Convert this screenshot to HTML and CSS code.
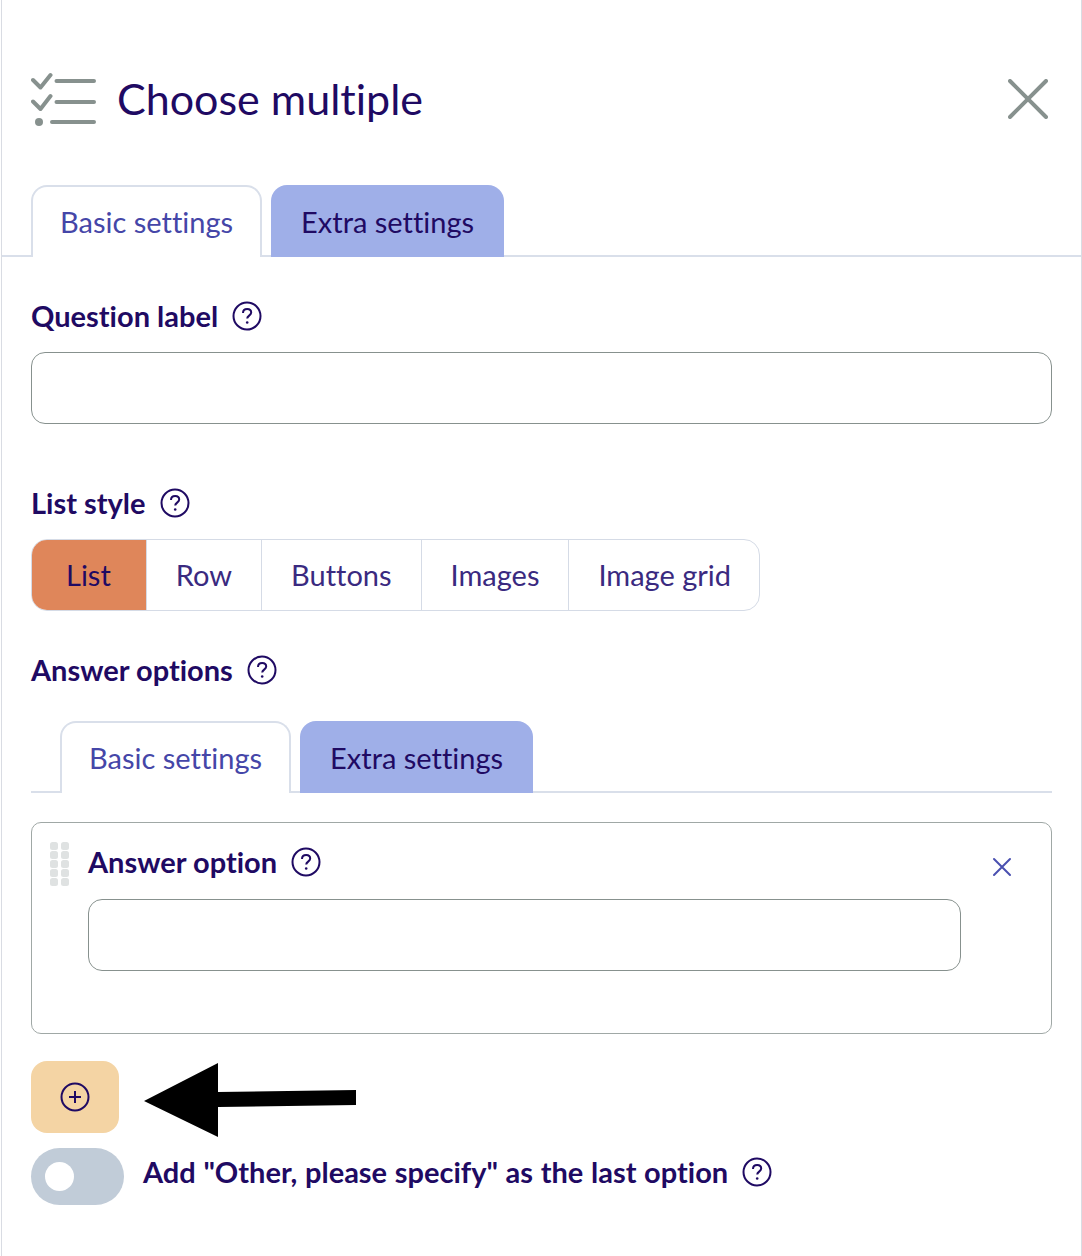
FILE: index.html
```html
<!DOCTYPE html>
<html lang="en">
<head>
<meta charset="utf-8">
<title>Choose multiple</title>
<link rel="stylesheet" href="styles.css">
</head>
<body>
<div class="panel">
  <header class="head">
    <svg class="head-icon" width="66" height="54" viewBox="0 0 66 54" fill="none" stroke="#87918e" stroke-width="4" stroke-linecap="round" stroke-linejoin="round">
      <path d="M2 8l7.500 7.500L19.500 3M2 29.500l7.500 7.500L19.500 24"/>
      <path d="M25.500 9h37.500M25.500 30h37.500M21 50h42"/>
      <circle cx="8" cy="50" r="4" fill="#87918e" stroke="none"/>
    </svg>
    <h1 class="title">Choose multiple</h1>
    <svg class="close" width="40" height="40" viewBox="0 0 40 40" fill="none" stroke="#87918e" stroke-width="4" stroke-linecap="round"><path d="M2 2l36 36M38 2L2 38"/></svg>
  </header>

  <div class="tabs tabs-main">
    <span class="tab tab-on">Basic settings</span>
    <span class="tab tab-off">Extra settings</span>
  </div>

  <div class="body">
    <div class="label q-label">Question label<svg class="help"><use href="#help"/></svg></div>
    <div class="input input-wide"></div>

    <div class="label style-label">List style<svg class="help"><use href="#help"/></svg></div>
    <div class="seg">
      <span class="seg-item seg-on">List</span>
      <span class="seg-item">Row</span>
      <span class="seg-item">Buttons</span>
      <span class="seg-item">Images</span>
      <span class="seg-item seg-last">Image grid</span>
    </div>

    <div class="label opt-label">Answer options<svg class="help"><use href="#help"/></svg></div>
    <div class="tabs tabs-sub">
      <span class="tab tab-on">Basic settings</span>
      <span class="tab tab-off">Extra settings</span>
    </div>

    <div class="card">
      <svg class="grip" width="20" height="44" viewBox="0 0 20 44" fill="#dfe2e2">
        <rect x="0" y="0" width="8" height="8" rx="2.500"/><rect x="11" y="0" width="8" height="8" rx="2.500"/>
        <rect x="0" y="9" width="8" height="8" rx="2.500"/><rect x="11" y="9" width="8" height="8" rx="2.500"/>
        <rect x="0" y="18" width="8" height="8" rx="2.500"/><rect x="11" y="18" width="8" height="8" rx="2.500"/>
        <rect x="0" y="27" width="8" height="8" rx="2.500"/><rect x="11" y="27" width="8" height="8" rx="2.500"/>
        <rect x="0" y="36" width="8" height="8" rx="2.500"/><rect x="11" y="36" width="8" height="8" rx="2.500"/>
      </svg>
      <div class="card-main">
        <div class="label">Answer option<svg class="help"><use href="#help"/></svg></div>
        <div class="input card-input"></div>
      </div>
      <svg class="card-x" width="20" height="20" viewBox="0 0 20 20" fill="none" stroke="#4a50b0" stroke-width="2" stroke-linecap="round"><path d="M2 2l16 16M18 2L2 18"/></svg>
    </div>

    <div class="add-row">
      <button class="add" type="button" aria-label="Add">
        <svg width="30" height="30" viewBox="0 0 30 30" fill="none" stroke="#1f0a63" stroke-width="2"><circle cx="15" cy="15" r="13.500"/><path d="M15 9v12M9 15h12"/></svg>
      </button>
    </div>

    <div class="toggle-row">
      <span class="toggle"><span class="knob"></span></span>
      <div class="label toggle-label">Add "Other, please specify" as the last option<svg class="help"><use href="#help"/></svg></div>
    </div>
  </div>

  <svg class="arrow" width="216" height="76" viewBox="0 0 216 76" fill="#000"><path d="M1 39L75 1v29l138-2v15L75 45v30z"/></svg>
</div>

<svg class="defs" width="0" height="0">
  <symbol id="help" viewBox="0 0 30 30">
    <circle cx="15" cy="15" r="13.500" fill="none" stroke="#1f0a63" stroke-width="2"/>
    <path d="M11 12c0-2.500 1.800-4 4.200-4 2.300 0 4 1.400 4 3.500 0 3-4 3.200-4 6" fill="none" stroke="#1f0a63" stroke-width="2"/>
    <circle cx="15.200" cy="21.500" r="1.300" fill="#1f0a63"/>
  </symbol>
</svg>
</body>
</html>
```

FILE: styles.css
```css
* { box-sizing: border-box; }
html, body { margin: 0; padding: 0; background: #fff; }
body { font-family: Lato, "Open Sans", sans-serif; color: #1f0a63; font-variant-ligatures: none; }

.panel {
  position: relative;
  width: 1081px;
  height: 1256px;
  margin: 0 0 0 1px;
  border-left: 1px solid #d9dce3;
  border-right: 1px solid #d9dce3;
  overflow: hidden;
}

.head {
  display: flex;
  align-items: center;
  height: 185px;
  padding: 12px 33px 0 29px;
}
.head-icon { flex: none; margin: 0 20px 0 0; }
.title { margin: 0; font-size: 43px; font-weight: 400; line-height: 52px; flex: 1; }
.close { flex: none; }

.tabs {
  display: flex;
  gap: 9px;
  height: 72px;
  border-bottom: 2px solid #d9dfea;
}
.tabs-main { padding-left: 29px; }
.tabs-sub { margin-top: 33px; padding-left: 29px; }
.tab {
  height: 72px;
  padding: 0 30px;
  font-size: 29px;
  line-height: 74px;
  border-radius: 16px 16px 0 0;
}
.tab-on { color: #4546a8; background: #fff; border: 2px solid #d9dfea; border-bottom: 0; padding: 0 27px; line-height: 70px; }
.tab-off { color: #1f0a63; background: #9fafe8; }

.body { padding: 0 29px; }
.label { display: flex; align-items: center; font-size: 29px; font-weight: 700; line-height: 36px; white-space: pre; }
.help { width: 30px; height: 30px; margin-left: 14px; flex: none; }
.q-label { margin-top: 41px; }
.style-label { margin-top: 61px; }
.opt-label { margin-top: 41px; }

.input {
  height: 72px;
  background: #fff;
  border: 1px solid #87918e;
  border-radius: 14px;
}
.input-wide { margin-top: 18px; width: 1021px; }

.seg {
  display: inline-flex;
  margin-top: 18px;
  height: 72px;
  border: 1px solid #d5dbe6;
  border-radius: 16px;
  overflow: hidden;
  vertical-align: top;
}
.seg-item {
  padding: 0 29px;
  font-size: 29px;
  line-height: 70px;
  color: #3a2a80;
  border-left: 1px solid #d5dbe6;
}
.seg-item:first-child { border-left: 0; }
.seg-on { background: #df865a; color: #1f0a63; padding: 0 35px 0 34px; }
.seg-last { padding-right: 28px; }

.card {
  position: relative;
  display: flex;
  margin-top: 29px;
  width: 1021px;
  height: 212px;
  border: 1px solid #a0a8a6;
  border-radius: 10px;
  padding: 19px 0 0 18px;
}
.grip { flex: none; }
.card-main { margin-left: 18px; padding-top: 2px; width: 873px; }
.card-input { margin-top: 19px; }
.card-x { position: absolute; top: 34px; right: 39px; }

.add-row { margin-top: 27px; }
.add {
  display: flex;
  align-items: center;
  justify-content: center;
  width: 88px;
  height: 72px;
  padding: 0;
  border: 0;
  border-radius: 16px;
  background: #f4d4a4;
}

.toggle-row { display: flex; align-items: center; gap: 19px; margin-top: 15px; }
.toggle-label { margin-bottom: 9px; word-spacing: 0.6px; }
.toggle {
  display: flex;
  align-items: center;
  width: 93px;
  height: 57px;
  padding-left: 14px;
  border-radius: 29px;
  background: #c1ccd8;
}
.knob { width: 29px; height: 29px; border-radius: 50%; background: #fff; }

.arrow { position: absolute; left: 141px; top: 1062px; }
.defs { position: absolute; }
```
